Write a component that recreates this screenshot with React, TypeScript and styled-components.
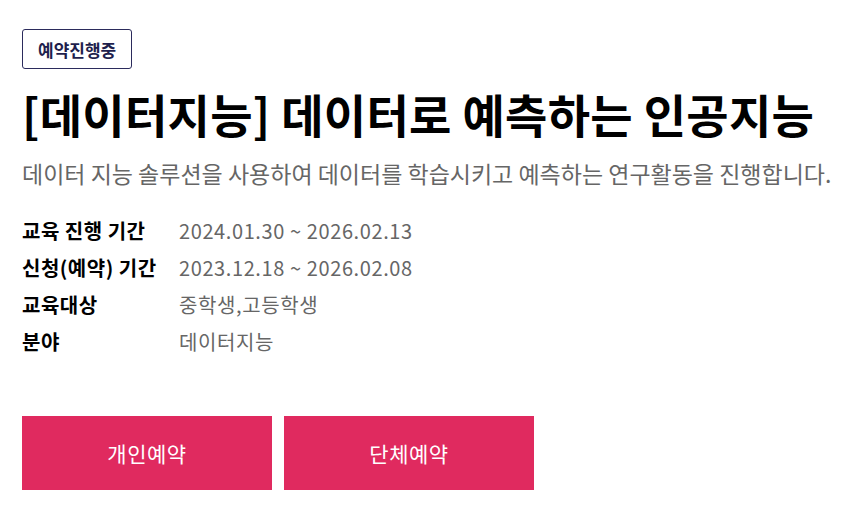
import React from 'react';
import styled, { createGlobalStyle } from 'styled-components';

const GlobalStyle = createGlobalStyle`
  body {
    margin: 0;
    background: #fff;
    font-family: "Noto Sans CJK KR", "Noto Sans", sans-serif;
  }
`;

const Page = styled.div`
  padding: 29px 22px 0;
`;

const Badge = styled.span`
  display: inline-flex;
  align-items: center;
  height: 40px;
  box-sizing: border-box;
  padding: 0 15px;
  border: 1px solid #2b2b5c;
  border-radius: 3px;
  color: #1f1f4d;
  font-size: 17px;
  font-weight: 700;
`;

const Title = styled.h1`
  margin: 16px 0 0;
  font-size: 46px;
  line-height: 56px;
  letter-spacing: 0.3px;
  font-weight: 700;
  color: #000;
  white-space: nowrap;
`;

const Summary = styled.p`
  margin: 16px 0 0;
  font-size: 23px;
  line-height: 32px;
  color: #666;
  white-space: nowrap;
`;

const InfoList = styled.dl`
  margin: 28px 0 0;
  display: grid;
  grid-template-columns: 157px 1fr;
  row-gap: 9px;
`;

const Term = styled.dt`
  font-size: 20px;
  line-height: 28px;
  letter-spacing: 0.5px;
  font-weight: 700;
  color: #000;
  white-space: nowrap;
`;

const Detail = styled.dd`
  margin: 0;
  font-size: 20px;
  line-height: 28px;
  letter-spacing: 0.6px;
  color: #666;
`;

const Actions = styled.div`
  display: flex;
  gap: 12px;
  margin-top: 60px;
`;

const ReserveButton = styled.button`
  width: 250px;
  height: 74px;
  border: none;
  background: #e02a5f;
  color: #fff;
  font-family: inherit;
  font-size: 21px;
  letter-spacing: 0.5px;
  font-weight: 400;
  cursor: pointer;
`;

const info = [
  ['교육 진행 기간', '2024.01.30 ~ 2026.02.13'],
  ['신청(예약) 기간', '2023.12.18 ~ 2026.02.08'],
  ['교육대상', '중학생,고등학생'],
  ['분야', '데이터지능'],
];

export default function App() {
  return (
    <>
      <GlobalStyle />
      <Page>
        <Badge>예약진행중</Badge>
        <Title>[데이터지능] 데이터로 예측하는 인공지능</Title>
        <Summary>데이터 지능 솔루션을 사용하여 데이터를 학습시키고 예측하는 연구활동을 진행합니다.</Summary>
        <InfoList>
          {info.map(([term, detail]) => (
            <React.Fragment key={term}>
              <Term>{term}</Term>
              <Detail>{detail}</Detail>
            </React.Fragment>
          ))}
        </InfoList>
        <Actions>
          <ReserveButton>개인예약</ReserveButton>
          <ReserveButton>단체예약</ReserveButton>
        </Actions>
      </Page>
    </>
  );
}
